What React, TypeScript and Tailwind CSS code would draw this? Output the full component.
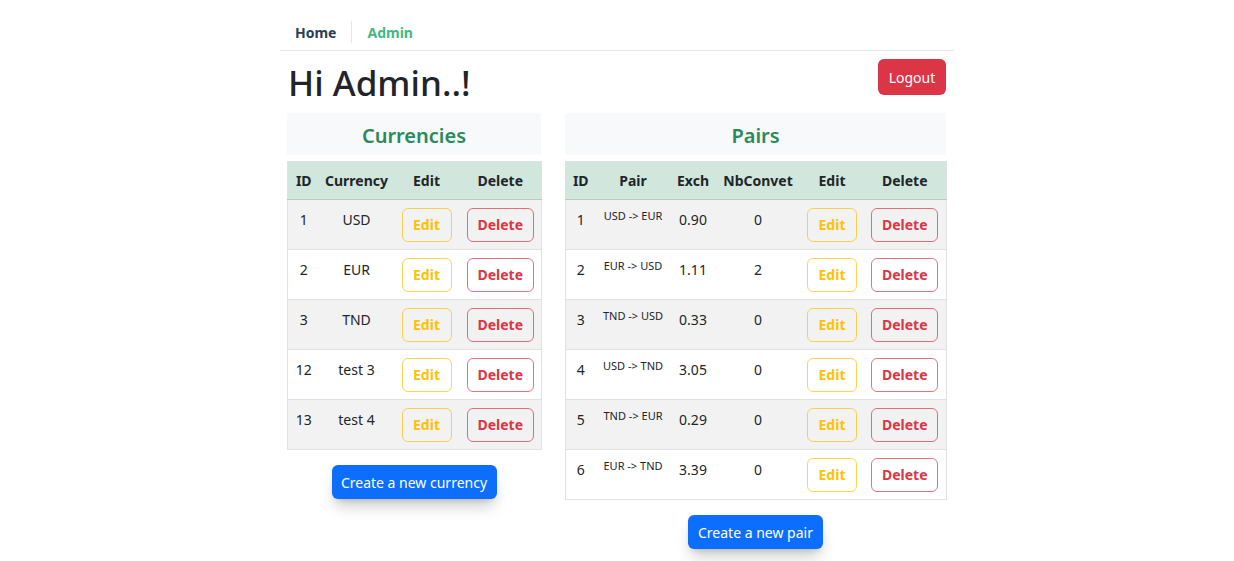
import React from "react";

const currencies = [
  { id: 1, name: "USD" },
  { id: 2, name: "EUR" },
  { id: 3, name: "TND" },
  { id: 12, name: "test 3" },
  { id: 13, name: "test 4" },
];

const pairs = [
  { id: 1, pair: "USD -> EUR", exch: "0.90", nb: 0 },
  { id: 2, pair: "EUR -> USD", exch: "1.11", nb: 2 },
  { id: 3, pair: "TND -> USD", exch: "0.33", nb: 0 },
  { id: 4, pair: "USD -> TND", exch: "3.05", nb: 0 },
  { id: 5, pair: "TND -> EUR", exch: "0.29", nb: 0 },
  { id: 6, pair: "EUR -> TND", exch: "3.39", nb: 0 },
];

const EditButton = () => (
  <button className="h-[34px] w-[50px] rounded-md border border-[#ffc107]/70 text-[14px] font-bold text-[#ffc107]">
    Edit
  </button>
);

const DeleteButton = () => (
  <button className="h-[34px] w-[67px] rounded-md border border-[#dc3545]/70 text-[14px] font-bold text-[#dc3545]">
    Delete
  </button>
);

const CardTitle = ({ title }: { title: string }) => (
  <div className="flex h-[42px] items-center justify-center bg-[#f8f9fa] pt-[3px] text-[20px] font-semibold text-[#2a8a5a]">
    {title}
  </div>
);

const App: React.FC = () => {
  return (
    <div className="min-h-[561px] w-full bg-white font-['Noto_Sans',sans-serif] text-[#212529]">
      <div className="mx-auto w-[674px]">
        <nav className="flex h-[51px] items-center border-b border-[#e3e6e8] pt-[14px]">
          <a className="px-[15px] text-[14px] font-bold text-[#2c3e50]">Home</a>
          <span className="h-[22px] w-px bg-[#e3e6e8]" />
          <a className="px-[15px] text-[14px] font-bold text-[#42b983]">Admin</a>
        </nav>

        <div className="flex items-start justify-between pl-[8px] pr-[8px] pt-[8px]">
          <h1 className="text-[35px] font-medium leading-[48px]">Hi Admin..!</h1>
          <button className="h-[36px] w-[68px] rounded-md bg-[#dc3545] text-[14px] text-white">Logout</button>
        </div>

        <div className="grid grid-cols-[254px_381px] gap-x-6 pl-[7px] pt-[6px]">
          <div className="flex flex-col">
            <CardTitle title="Currencies" />
            <table className="mt-[6px] w-full table-fixed border border-[#dee2e6] text-center text-[14px]">
              <colgroup>
                <col className="w-[32px]" />
                <col className="w-[74px]" />
                <col className="w-[66px]" />
                <col className="w-[82px]" />
              </colgroup>
              <thead>
                <tr className="h-[38px] border-b border-[#b9c9c1] bg-[#d1e7dd] font-bold">
                  <th>ID</th>
                  <th>Currency</th>
                  <th>Edit</th>
                  <th>Delete</th>
                </tr>
              </thead>
              <tbody>
                {currencies.map((c, i) => (
                  <tr key={c.id} className={`h-[50px] border-t border-[#dee2e6] ${i % 2 === 0 ? "bg-[#f2f2f2]" : "bg-white"}`}>
                    <td className="align-top pt-[9px]">{c.id}</td>
                    <td className="align-top pt-[9px]">{c.name}</td>
                    <td className="align-middle">
                      <EditButton />
                    </td>
                    <td className="align-middle">
                      <DeleteButton />
                    </td>
                  </tr>
                ))}
              </tbody>
            </table>
            <div className="mt-[15px] flex justify-center">
              <button className="h-[34px] w-[165px] rounded-md bg-[#0d6efd] text-[14px] text-white shadow-lg shadow-black/20">
                Create a new currency
              </button>
            </div>
          </div>

          <div className="flex flex-col">
            <CardTitle title="Pairs" />
            <table className="mt-[6px] w-full table-fixed border border-[#dee2e6] text-center text-[14px]">
              <colgroup>
                <col className="w-[30px]" />
                <col className="w-[75px]" />
                <col className="w-[45px]" />
                <col className="w-[85px]" />
                <col className="w-[63px]" />
                <col className="w-[83px]" />
              </colgroup>
              <thead>
                <tr className="h-[38px] border-b border-[#b9c9c1] bg-[#d1e7dd] font-bold">
                  <th>ID</th>
                  <th>Pair</th>
                  <th>Exch</th>
                  <th>NbConvet</th>
                  <th>Edit</th>
                  <th>Delete</th>
                </tr>
              </thead>
              <tbody>
                {pairs.map((p, i) => (
                  <tr key={p.id} className={`h-[50px] border-t border-[#dee2e6] ${i % 2 === 0 ? "bg-[#f2f2f2]" : "bg-white"}`}>
                    <td className="align-top pt-[9px]">{p.id}</td>
                    <td className="align-top pt-[8px] text-[11px]">{p.pair}</td>
                    <td className="align-top pt-[9px]">{p.exch}</td>
                    <td className="align-top pt-[9px]">{p.nb}</td>
                    <td className="align-middle">
                      <EditButton />
                    </td>
                    <td className="align-middle">
                      <DeleteButton />
                    </td>
                  </tr>
                ))}
              </tbody>
            </table>
            <div className="mt-[15px] flex justify-center">
              <button className="h-[34px] w-[135px] rounded-md bg-[#0d6efd] text-[14px] text-white shadow-lg shadow-black/20">
                Create a new pair
              </button>
            </div>
          </div>
        </div>
      </div>
    </div>
  );
};

export default App;
